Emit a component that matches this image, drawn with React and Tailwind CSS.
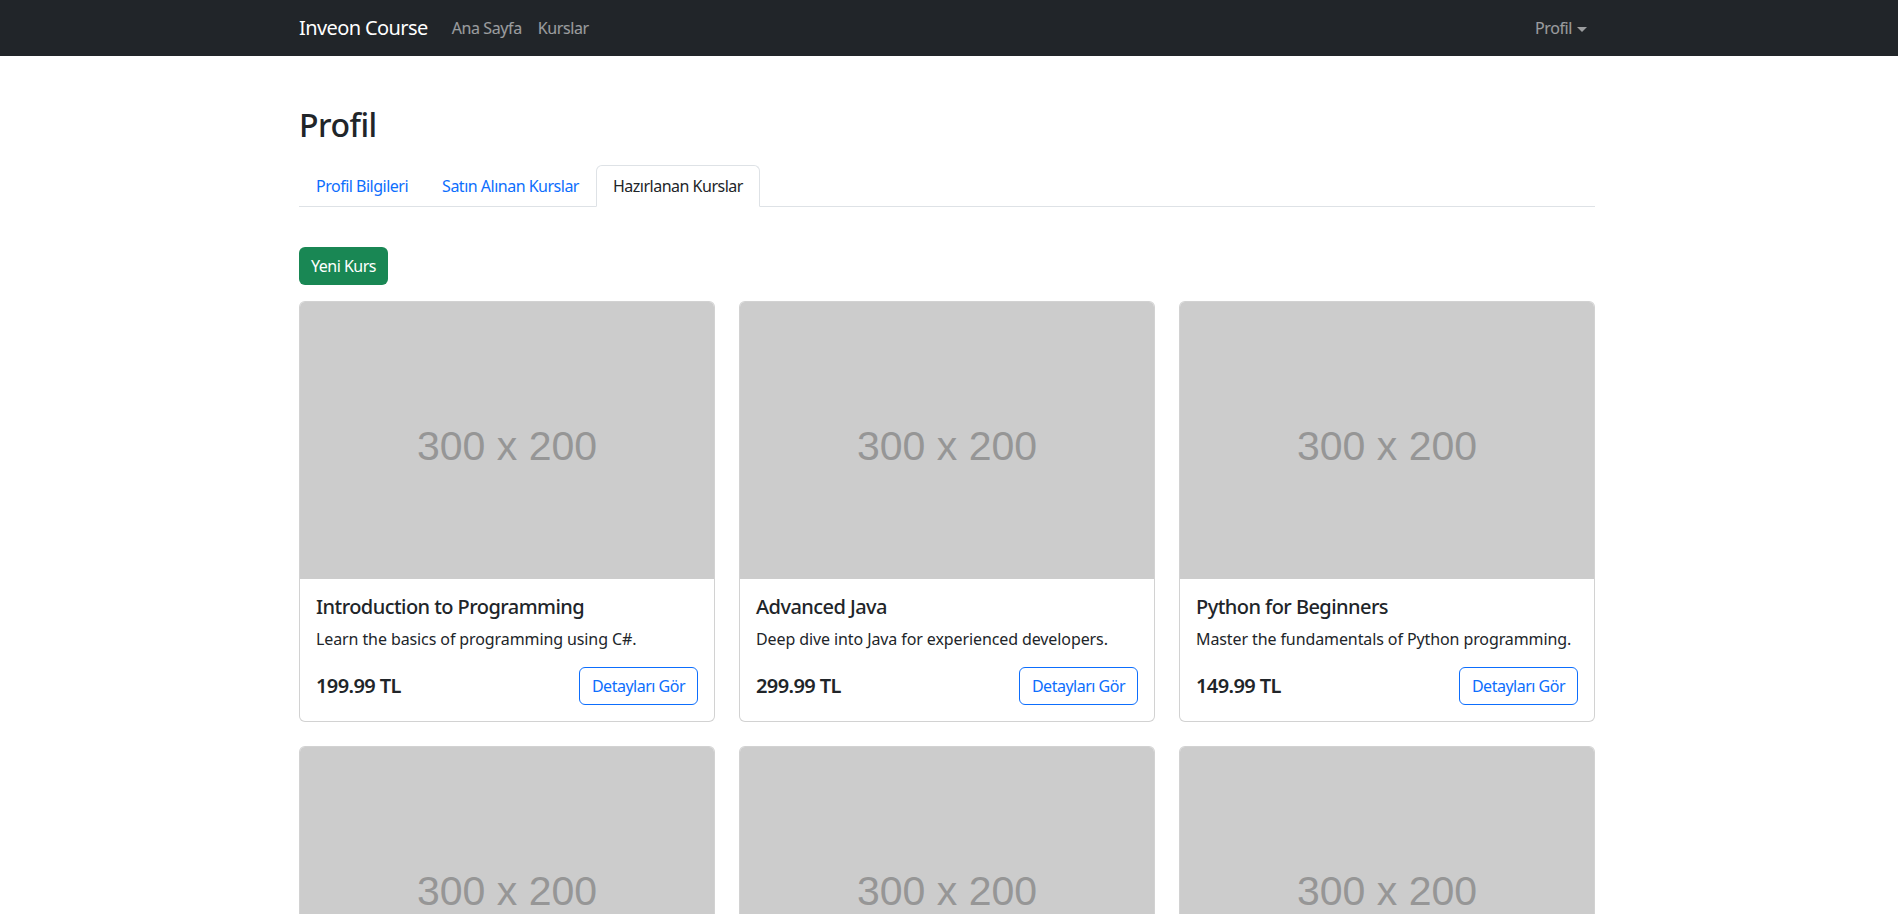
import React, { useState } from "react";

const courses = [
  {
    id: 1,
    title: "Introduction to Programming",
    description: "Learn the basics of programming using C#.",
    price: "199.99"
  },
  {
    id: 2,
    title: "Advanced Java",
    description: "Deep dive into Java for experienced developers.",
    price: "299.99"
  },
  {
    id: 3,
    title: "Python for Beginners",
    description: "Master the fundamentals of Python programming.",
    price: "149.99"
  },
  {
    id: 4,
    title: "Web Development with ASP.NET",
    description: "Build modern web applications with ASP.NET Core.",
    price: "249.99"
  },
  {
    id: 5,
    title: "Data Structures",
    description: "Understand arrays, lists, trees and graphs.",
    price: "179.99"
  },
  {
    id: 6,
    title: "SQL Fundamentals",
    description: "Query and manage relational databases.",
    price: "129.99"
  }
];

const tabs = ["Profil Bilgileri", "Satın Alınan Kurslar", "Hazırlanan Kurslar"];

const CourseCard = ({ course }) => (
  <div className="flex flex-col rounded-[6px] border border-black/[0.175] bg-white overflow-hidden">
    {/* placeholder image */}
    <div className="h-[277px] bg-[#cccccc] flex items-center justify-center pt-[12px]">
      <span className="text-[41px] text-[#969696] font-['Liberation_Sans',Arial,sans-serif]">
        300 x 200
      </span>
    </div>
    <div className="p-4 flex flex-col">
      <h5 className="text-[20px] leading-[24px] font-medium tracking-[-0.55px] mb-2">{course.title}</h5>
      <p className="text-[16px] leading-[24px] tracking-[-0.1px] mb-4">{course.description}</p>
      <div className="flex items-center justify-between">
        <span className="text-[20px] leading-[24px] font-semibold tracking-[-0.6px]">{course.price} TL</span>
        <button className="h-[38px] px-3 rounded-[6px] border border-[#0d6efd] text-[#0d6efd] text-[16px] leading-[24px] tracking-[-0.5px]">
          Detayları Gör
        </button>
      </div>
    </div>
  </div>
);

const App = () => {
  const [activeTab, setActiveTab] = useState(2);

  return (
    <div className="min-h-screen bg-white text-[#212529] font-['Noto_Sans',sans-serif]">
      <nav className="bg-[#212529] h-[56px] pr-1">
        <div className="w-[1296px] mx-auto h-full flex items-center">
          <span className="text-white text-[20px] tracking-[-0.6px] mr-4">Inveon Course</span>
          <a className="px-2 text-[16px] tracking-[-0.4px] text-white/55">Ana Sayfa</a>
          <a className="px-2 text-[16px] tracking-[-0.4px] text-white/55">Kurslar</a>
          <div className="ml-auto px-2 flex items-center text-[16px] tracking-[-0.4px] text-white/55">
            Profil
            <span className="ml-[5px] mt-[2px] w-0 h-0 border-l-[5px] border-r-[5px] border-t-[5px] border-l-transparent border-r-transparent border-t-white/55"></span>
          </div>
        </div>
      </nav>

      <div className="pr-1">
        <div className="w-[1296px] mx-auto pt-[50px]">
          <h1 className="text-[32px] leading-[38px] font-medium tracking-[-0.5px] mb-[21px]">Profil</h1>

          <div className="flex border-b border-[#dee2e6]">
            {tabs.map((tab, i) => (
              <button
                key={tab}
                onClick={() => setActiveTab(i)}
                className={
                  i === activeTab
                    ? "-mb-px px-4 py-2 text-[16px] leading-[24px] tracking-[-0.5px] border border-[#dee2e6] border-b-white bg-white rounded-t-[6px] text-[#212529]"
                    : "-mb-px px-4 py-2 text-[16px] leading-[24px] tracking-[-0.5px] border border-transparent text-[#0d6efd]"
                }
              >
                {tab}
              </button>
            ))}
          </div>

          <div className="pt-[40px]">
            <button className="h-[38px] px-3 rounded-[6px] bg-[#198754] text-white text-[16px] leading-[24px] tracking-[-0.5px] mb-4">
              Yeni Kurs
            </button>

            <div className="grid grid-cols-3 gap-6">
              {courses.map(course => (
                <CourseCard key={course.id} course={course} />
              ))}
            </div>
          </div>
        </div>
      </div>
    </div>
  );
};

export default App;
